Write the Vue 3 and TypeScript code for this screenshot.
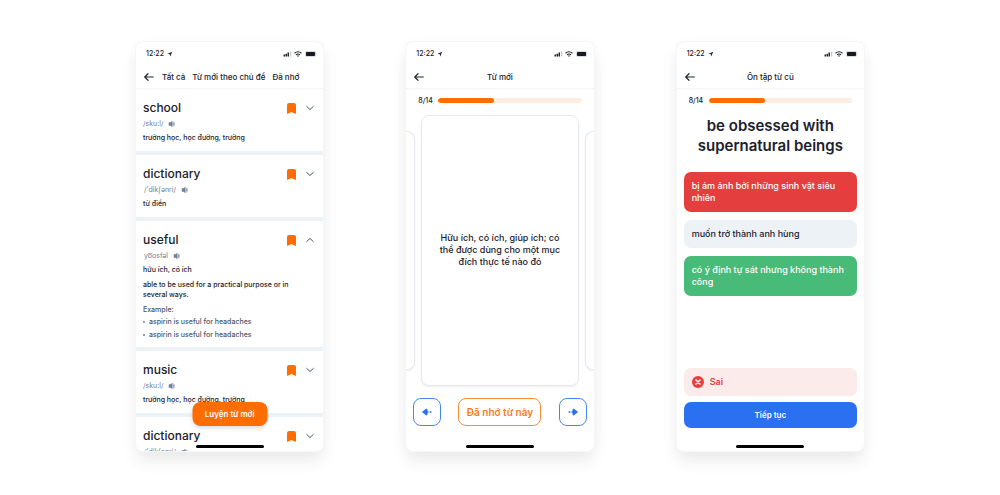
<script setup lang="ts">
import { ref } from 'vue'

interface Word {
  term: string
  sound: string
  inset?: boolean
  meaning?: string
  definition?: string
  examples?: string[]
  open?: boolean
}

interface Option {
  text: string
  state: 'wrong' | 'plain' | 'right'
}

const screens = ['list', 'card', 'quiz'] as const
const titles: Record<string, string> = { card: 'Từ mới', quiz: 'Ôn tập từ cũ' }
const tabs = ['Tất cả', 'Từ mới theo chủ đề', 'Đã nhớ']

const words = ref<Word[]>([
  { term: 'school', sound: '/sku:l/', meaning: 'trường học, học đường, trường' },
  { term: 'dictionary', sound: "/'dikʃənri/", inset: true, meaning: 'từ điển' },
  {
    term: 'useful',
    sound: 'yo͞osfəl',
    inset: true,
    meaning: 'hữu ích, có ích',
    definition: 'able to be used for a practical purpose or in several ways.',
    examples: ['aspirin is useful for headaches', 'aspirin is useful for headaches'],
    open: true,
  },
  { term: 'music', sound: '/sku:l/', meaning: 'trường học, học đường, trường' },
  { term: 'dictionary', sound: "/'dikʃənri/", inset: true },
])

const options: Option[] = [
  { text: 'bị ám ảnh bởi những sinh vật siêu nhiên', state: 'wrong' },
  { text: 'muốn trở thành anh hùng', state: 'plain' },
  { text: 'có ý định tự sát nhưng không thành công', state: 'right' },
]

const step = 8
const total = 14
const progress = 39
</script>

<template>
  <main class="board">
    <section v-for="screen in screens" :key="screen" class="phone">
      <div class="status">
        <span class="clock">12:22</span>
        <svg class="locate" width="6" height="6" viewBox="0 0 12 12"><path d="M10.500 1.500 1 5.500l4.500 1 1 4.500z" fill="#222936" /></svg>
        <svg class="signal" width="9" height="6" viewBox="0 0 18 12">
          <path d="M1 7h3v4H1zM5 5.500h3V11H5zM9 3h3v8H9z" fill="#20242c" />
          <path d="M14 1h2.500v10H14z" fill="#c3c7ce" />
        </svg>
        <svg class="wifi" width="8" height="6" viewBox="0 0 16 12" fill="none" stroke="#20242c" stroke-width="2.200">
          <path d="M1 4.500Q8-1.500 15 4.500M4 7.500q4-3.200 8 0" />
          <path d="M6.500 9.500h3L8 11z" fill="#20242c" stroke-width="1" />
        </svg>
        <svg width="12" height="6" viewBox="0 0 24 12">
          <rect x="0.800" y="0.800" width="20.400" height="10.400" rx="3" fill="none" stroke="#a9adb5" stroke-width="1" />
          <rect x="2" y="2" width="18" height="8" rx="1.500" fill="#16191f" />
          <path d="M22.500 4v4q1.500-2 0-4" fill="#a9adb5" />
        </svg>
      </div>

      <header class="nav" :class="{ centred: screen !== 'list' }">
        <button class="icon-btn" type="button" aria-label="Quay lại">
          <svg width="10" height="8" viewBox="0 0 20 16" fill="none" stroke="#1f2733" stroke-width="2.400" stroke-linecap="round" stroke-linejoin="round"><path d="M18.500 8H2M8 1.500 1.500 8 8 14.500" /></svg>
        </button>
        <nav v-if="screen === 'list'" class="tabs">
          <button v-for="tab in tabs" :key="tab" type="button">{{ tab }}</button>
        </nav>
        <h1 v-else>{{ titles[screen] }}</h1>
      </header>

      <template v-if="screen === 'list'">
        <div class="words">
          <article v-for="(word, i) in words" :key="i" class="word">
            <div class="word-head">
              <h2>{{ word.term }}</h2>
              <button class="icon-btn" type="button" aria-label="Đánh dấu">
                <svg width="9" height="11" viewBox="0 0 18 22"><path d="M4 0h10q4 0 4 4v16.500q0 1.500-1.500 1L9 18l-7.500 3.500Q0 22 0 20.500V4q0-4 4-4z" fill="#ff6c00" /></svg>
              </button>
              <button class="icon-btn" type="button" :aria-expanded="!!word.open" aria-label="Chi tiết" @click="word.open = !word.open">
                <svg width="8" height="6" viewBox="0 0 16 12" fill="none" stroke="#4a5568" stroke-width="2" stroke-linecap="round" stroke-linejoin="round"><path :d="word.open ? 'M1.500 9 8 3l6.500 6' : 'M1.500 3 8 9l6.500-6'" /></svg>
              </button>
            </div>
            <div class="sound" :class="{ inset: word.inset }">
              <span>{{ word.sound }}</span>
              <button class="icon-btn" type="button" aria-label="Phát âm">
                <svg width="8" height="8" viewBox="0 0 16 16"><path d="M9 1.500v13L5 11.500H1.500v-7H5z" fill="#718096" /><path d="M10 3.500q4 4.500 0 9z" fill="#8c98ab" /><path d="M11.500 3q4 5 0 10" fill="none" stroke="#a0aec0" stroke-width="1.500" /></svg>
              </button>
            </div>
            <p v-if="word.meaning" class="meaning">{{ word.meaning }}</p>
            <template v-if="word.open && word.examples">
              <p class="definition">{{ word.definition }}</p>
              <p class="example">Example:</p>
              <ul>
                <li v-for="(line, n) in word.examples" :key="n">{{ line }}</li>
              </ul>
            </template>
          </article>
        </div>
        <button class="practice" type="button">Luyện từ mới</button>
      </template>

      <template v-else>
        <div class="progress">
          <span>{{ step }}/{{ total }}</span>
          <div class="track" role="progressbar" aria-label="Tiến độ" :aria-valuenow="step" :aria-valuemax="total">
            <div class="fill" :style="{ width: progress + '%' }"></div>
          </div>
        </div>

        <template v-if="screen === 'card'">
          <div class="carousel">
            <div class="peek before"></div>
            <div class="flash"><p>Hữu ích, có ích, giúp ích; có thể được dùng cho một mục đích thực tế nào đó</p></div>
            <div class="peek after"></div>
          </div>
          <div class="actions">
            <button class="step" type="button" aria-label="Từ trước">
              <svg width="10" height="8" viewBox="0 0 20 16" fill="#2b70f0"><path d="M1 7 8 1.500q3-1 3 2v9q0 3-3 2L1 9q-1-1 0-2z" /><rect x="10" y="6.500" width="3" height="3" /><rect x="15" y="6.500" width="4" height="3" rx="1" /></svg>
            </button>
            <button class="remember" type="button">Đã nhớ từ này</button>
            <button class="step" type="button" aria-label="Từ tiếp theo">
              <svg width="10" height="8" viewBox="0 0 20 16" fill="#2b70f0"><path d="M19 7 12 1.500q-3-1-3 2v9q0 3 3 2L19 9q1-1 0-2z" /><rect x="7" y="6.500" width="3" height="3" /><rect x="1" y="6.500" width="4" height="3" rx="1" /></svg>
            </button>
          </div>
        </template>

        <div v-else class="quiz">
          <h2>be obsessed with supernatural beings</h2>
          <button v-for="option in options" :key="option.text" class="option" :class="option.state" type="button">{{ option.text }}</button>
          <div class="result" role="status">
            <svg width="12" height="12" viewBox="0 0 24 24"><circle cx="12" cy="12" r="12" fill="#e53e3e" /><path d="m8 8 8 8m0-8-8 8" stroke="#fff" stroke-width="3" stroke-linecap="round" /></svg>
            <span>Sai</span>
          </div>
          <button class="continue" type="button">Tiếp tục</button>
        </div>
      </template>

      <div class="home"></div>
    </section>
  </main>
</template>

<style>
body {
  margin: 0;
  background: #fff;
}
</style>

<style scoped>
.board {
  display: grid;
  grid-template-columns: repeat(3, 1fr);
  column-gap: 83px;
  padding: 42px 13.6%;
  font-family: Inter, "Noto Sans", sans-serif;
  font-size: 7px;
  color: #1a202c;
}

.board * {
  box-sizing: border-box;
}

.phone {
  position: relative;
  display: flex;
  flex-direction: column;
  min-width: 0;
  aspect-ratio: 187 / 408;
  overflow: hidden;
  border-radius: 7px;
  background: #fff;
  box-shadow: 0 0 0 1px #f4f6f9, 0 10px 16px rgba(0, 0, 0, 0.08), 0 0 16px rgba(0, 0, 0, 0.02);
}

button {
  padding: 0;
  border: 0;
  background: none;
  color: inherit;
  font: inherit;
  cursor: pointer;
}

h1,
h2,
p,
ul {
  margin: 0;
  padding: 0;
  font-weight: 500;
}

svg {
  display: block;
}

.status {
  display: flex;
  align-items: center;
  height: 23px;
  padding: 0 6px 0 10px;
  font-weight: 500;
}

.locate {
  margin-left: 3px;
}

.signal {
  margin-left: auto;
}

.wifi {
  margin: 0 3px 0 2px;
}

.nav {
  display: flex;
  align-items: center;
  height: 24px;
  padding: 0 8px;
  border-bottom: 1px solid #f4f5f8;
  font-size: 8px;
  font-weight: 500;
}

.nav.centred {
  display: grid;
  grid-template-columns: 1fr auto 1fr;
}

.nav h1 {
  font-size: 8px;
}

.icon-btn {
  display: block;
}

.tabs {
  display: flex;
  gap: 7px;
  margin-left: 8px;
  white-space: nowrap;
}

.words {
  flex: 1;
  min-height: 0;
  overflow: hidden;
}

.word {
  padding: 11px 9px 6px 7px;
  border-bottom: 4px solid #edf2f7;
}

.word-head {
  display: flex;
  align-items: center;
  gap: 10px;
  height: 16px;
}

.word-head h2 {
  flex: 1;
  font-size: 12px;
  line-height: 16px;
}

.sound {
  display: flex;
  align-items: center;
  gap: 5px;
  height: 15px;
  color: #718096;
}

.sound.inset {
  padding-left: 1px;
}

.meaning {
  line-height: 14px;
}

.definition {
  margin-top: 3px;
  line-height: 10px;
}

.example {
  margin-top: 4px;
  color: #4a5568;
  line-height: 11px;
}

ul {
  color: #4a5568;
  list-style: none;
}

li {
  display: flex;
  align-items: center;
  gap: 4px;
  line-height: 13px;
}

li::before {
  content: "";
  width: 2px;
  height: 2px;
  border-radius: 50%;
  background: #718096;
}

.word:first-child {
  margin-top: -1px;
  padding-top: 12px;
}

.practice {
  position: absolute;
  bottom: 25px;
  left: 50%;
  width: 75px;
  height: 24px;
  transform: translateX(-50%);
  border-radius: 8px;
  background: #ff6c00;
  box-shadow: 0 2px 4px rgba(0, 0, 0, 0.15);
  color: #fff;
  font-size: 8px;
  font-weight: 600;
}

.home {
  position: absolute;
  bottom: 3px;
  left: 50%;
  width: 68px;
  height: 3px;
  transform: translateX(-50%);
  border-radius: 2px;
  background: #000;
}

.progress {
  display: flex;
  align-items: center;
  height: 23px;
  padding: 0 12px;
}

.progress span {
  width: 20px;
  font-weight: 500;
}

.track {
  flex: 1;
  height: 5px;
  overflow: hidden;
  border-radius: 3px;
  background: #ffede1;
}

.fill {
  height: 5px;
  border-radius: 3px;
  background: #ff6c00;
}

.carousel {
  display: flex;
  flex: 1;
  gap: 6px;
  padding-top: 3px;
}

.flash {
  display: flex;
  flex: 1;
  align-items: center;
  padding: 0 16px;
  border: 1px solid #e5e8ef;
  border-radius: 8px;
  box-shadow: 0 1px 2px rgba(0, 0, 0, 0.08);
  font-size: 9px;
  line-height: 12px;
  text-align: center;
}

.peek {
  width: 9px;
  margin: 16px 0;
  border: 1px solid #e5e8ef;
  box-shadow: 0 1px 2px rgba(0, 0, 0, 0.08);
}

.before {
  border-left: 0;
  border-radius: 0 8px 8px 0;
}

.after {
  border-right: 0;
  border-radius: 8px 0 0 8px;
}

.actions {
  display: flex;
  justify-content: space-between;
  padding: 12px 7px 25px;
}

.step {
  display: grid;
  place-items: center;
  width: 28px;
  height: 28px;
  border: 1px solid #4a86f3;
  border-radius: 8px;
}

.remember {
  width: 83px;
  height: 28px;
  border: 1px solid #ff8a35;
  border-radius: 8px;
  color: #ff7a1a;
  font-size: 10px;
  font-weight: 600;
}

.quiz {
  display: flex;
  flex: 1;
  flex-direction: column;
  padding: 4px 7px 23px;
}

.quiz h2 {
  margin-bottom: 16px;
  font-size: 15px;
  font-weight: 600;
  line-height: 20px;
  text-align: center;
}

.option {
  margin-bottom: 8px;
  padding: 8px;
  border-radius: 7px;
  font-size: 9px;
  font-weight: 500;
  line-height: 12px;
  text-align: left;
}

.wrong {
  background: #e53e3e;
  color: #fff;
}

.plain {
  background: #edf2f7;
}

.right {
  background: #48bb78;
  color: #fff;
}

.result {
  display: flex;
  align-items: center;
  gap: 6px;
  height: 28px;
  margin: auto 0 6px;
  padding: 0 8px;
  border-radius: 7px;
  background: #fcebeb;
  color: #e53e3e;
  font-size: 9px;
  font-weight: 600;
}

.continue {
  height: 26px;
  border-radius: 7px;
  background: #2b70f0;
  color: #fff;
  font-size: 8px;
  font-weight: 600;
}
</style>
